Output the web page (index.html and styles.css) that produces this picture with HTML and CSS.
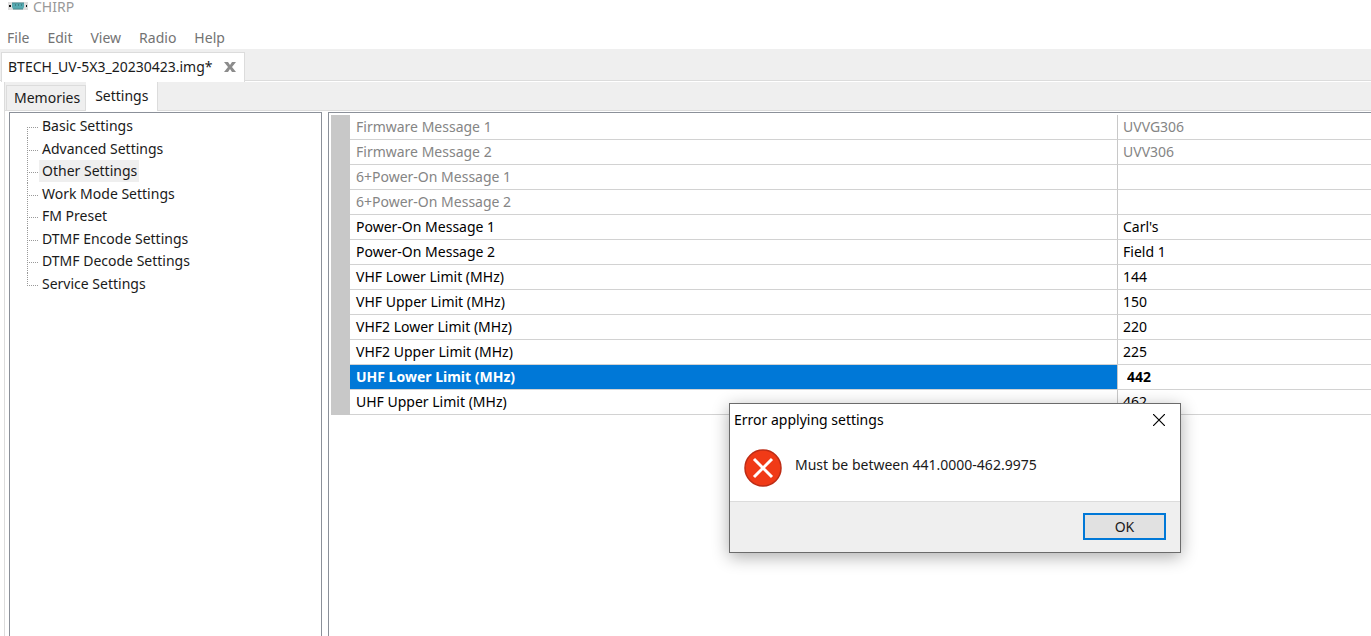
FILE: index.html
```html
<!DOCTYPE html>
<html lang="en">
<head>
<meta charset="utf-8">
<title>CHIRP</title>
<link rel="stylesheet" href="styles.css">
</head>
<body>
<div class="app">
  <header class="titlebar">
    <svg class="app-icon" width="20" height="8" viewBox="0 0 20 8" aria-hidden="true">
      <rect width="20" height="8" fill="#dedede"/>
      <path d="M4 1h12v4l-1 2H5L4 5z" fill="#55a9b0"/>
      <path d="M4 1h12M5 7h10" stroke="#4a8a90" fill="none"/>
      <path d="M1 4h2M18 4h1" stroke="#111" stroke-width="2"/>
      <path d="M7 3h1M10 3h1M13 3h1" stroke="#2d5b60"/>
    </svg>
    <span>CHIRP</span>
  </header>
  <nav class="menubar">
    <button type="button">File</button>
    <button type="button">Edit</button>
    <button type="button">View</button>
    <button type="button">Radio</button>
    <button type="button">Help</button>
  </nav>
  <div class="file-tabs">
    <div class="file-tab">
      <span>BTECH_UV-5X3_20230423.img*</span>
      <button type="button" class="tab-close" aria-label="Close tab">
        <svg width="12" height="10" viewBox="0 0 12 10"><path d="M0 0h4l2 3 2-3h4L8 5l4 5H8L6 7l-2 3H0l4-5z" fill="#8c8c8c"/></svg>
      </button>
    </div>
  </div>
  <div class="page">
    <div class="page-tabs" role="tablist">
      <button type="button" role="tab" class="page-tab">Memories</button>
      <button type="button" role="tab" class="page-tab active" aria-selected="true">Settings</button>
    </div>
    <main class="panes">
      <nav class="tree">
        <ul>
          <li><button type="button">Basic Settings</button></li>
          <li><button type="button">Advanced Settings</button></li>
          <li><button type="button" class="current">Other Settings</button></li>
          <li><button type="button">Work Mode Settings</button></li>
          <li><button type="button">FM Preset</button></li>
          <li><button type="button">DTMF Encode Settings</button></li>
          <li><button type="button">DTMF Decode Settings</button></li>
          <li><button type="button">Service Settings</button></li>
        </ul>
      </nav>
      <section class="grid">
        <table>
          <tbody>
            <tr class="readonly"><th scope="row">Firmware Message 1</th><td>UVVG306</td></tr>
            <tr class="readonly"><th scope="row">Firmware Message 2</th><td>UVV306</td></tr>
            <tr class="readonly"><th scope="row">6+Power-On Message 1</th><td></td></tr>
            <tr class="readonly"><th scope="row">6+Power-On Message 2</th><td></td></tr>
            <tr><th scope="row">Power-On Message 1</th><td>Carl's</td></tr>
            <tr><th scope="row">Power-On Message 2</th><td>Field 1</td></tr>
            <tr><th scope="row">VHF Lower Limit (MHz)</th><td>144</td></tr>
            <tr><th scope="row">VHF Upper Limit (MHz)</th><td>150</td></tr>
            <tr><th scope="row">VHF2 Lower Limit (MHz)</th><td>220</td></tr>
            <tr><th scope="row">VHF2 Upper Limit (MHz)</th><td>225</td></tr>
            <tr class="selected"><th scope="row"><label for="uhf-lower">UHF Lower Limit (MHz)</label></th><td><input id="uhf-lower" type="text" value="442"></td></tr>
            <tr><th scope="row">UHF Upper Limit (MHz)</th><td>462</td></tr>
          </tbody>
        </table>
      </section>
    </main>
  </div>
</div>
<div class="dialog" role="alertdialog" aria-labelledby="dialog-title" aria-describedby="dialog-text">
  <div class="dialog-title">
    <span id="dialog-title">Error applying settings</span>
    <button type="button" class="dialog-close" aria-label="Close">
      <svg width="12" height="12" viewBox="0 0 12 12"><path d="M0 0l12 12M12 0L0 12" stroke="#000" stroke-width="1.2"/></svg>
    </button>
  </div>
  <div class="dialog-body">
    <svg width="38" height="38" viewBox="0 0 38 38" aria-hidden="true">
      <circle cx="19" cy="19" r="18" fill="#f03a17" stroke="#bd2c15" stroke-width="1.5"/>
      <path d="M10 10l18 18M28 10L10 28" stroke="#fff" stroke-width="3"/>
    </svg>
    <p id="dialog-text">Must be between 441.0000-462.9975</p>
  </div>
  <div class="dialog-actions">
    <button type="button" class="ok">OK</button>
  </div>
</div>
</body>
</html>
```
FILE: styles.css
```css
* { box-sizing: border-box; }

body {
  margin: 0;
  overflow: hidden;
  background: #fff;
  color: #1a1a1a;
  font: 14px/20px "Noto Sans", sans-serif;
}

button, input {
  margin: 0;
  padding: 0;
  border: 0;
  background: none;
  color: inherit;
  font: inherit;
}

.app {
  display: flex;
  flex-direction: column;
  height: 100vh;
}

.titlebar {
  display: flex;
  align-items: flex-start;
  gap: 5px;
  height: 26px;
  padding-left: 8px;
  line-height: 14px;
  color: #999;
}

.app-icon { margin-top: 2px; }

.menubar {
  display: flex;
  gap: 18px;
  height: 23px;
  padding: 2px 7px 0;
  color: #737373;
}

.menubar button { height: 20px; }

.file-tabs {
  display: flex;
  height: 33px;
  padding: 3px 0 0 1px;
  background: #efefef;
  box-shadow: inset 0 -1px #fff, inset 0 -2px #dcdcdc;
}

.file-tab {
  display: flex;
  align-items: center;
  gap: 11px;
  padding: 0 8px 2px 6px;
  border: 1px solid #dcdcdc;
  border-bottom: 0;
  background: #fff;
}

.tab-close { display: flex; }

.page {
  display: flex;
  flex: 1;
  flex-direction: column;
  margin-left: 4px;
  border-left: 1px solid #dcdcdc;
}

.page-tabs {
  display: flex;
  align-items: flex-end;
  height: 29px;
  padding-left: 1px;
  background: #efefef;
  box-shadow: inset 0 -1px #dcdcdc;
}

.page-tab {
  height: 26px;
  padding: 0 5px 0 7px;
  border: 1px solid #dcdcdc;
}

.page-tab.active {
  height: 29px;
  padding: 0 9px 2px;
  border-width: 0 1px 0 0;
  background: #fff;
}

.panes {
  display: flex;
  flex: 1;
  gap: 6px;
  padding: 1px 0 0 4px;
}

.tree {
  width: 313px;
  border: 1px solid #8b9099;
  border-width: 1px 1px 0;
}

.tree ul {
  display: flex;
  flex-direction: column;
  height: 180px;
  margin: 2px 0 0 17px;
  padding: 0;
  list-style: none;
}

.tree li {
  display: flex;
  flex: 1;
  align-items: center;
  padding-left: 12px;
  background:
    repeating-linear-gradient(90deg, #999 0 1px, transparent 1px 2px) 0 12px / 11px 1px no-repeat,
    repeating-linear-gradient(#999 0 1px, transparent 1px 2px) 0 0 / 1px 100% no-repeat;
}

.tree li:first-child {
  background-position: 0 12px, 0 12px;
}

.tree li:last-child {
  background-size: 11px 1px, 1px 12px;
}

.tree button {
  height: 22px;
  padding: 0 2px 0 3px;
}

.tree .current { background: #efefef; }

.grid {
  flex: 1;
  padding: 2px 0 0 2px;
  border: 1px solid #8b9099;
  border-width: 1px 0 0 1px;
}

.grid table {
  width: 100%;
  border-collapse: separate;
  border-spacing: 0;
  border-left: 19px solid #c8c8c8;
  table-layout: fixed;
  color: #000;
}

.grid th, .grid td {
  height: 25px;
  padding: 0 6px;
  border-bottom: 1px solid #d2d2d2;
  font-weight: 400;
  text-align: left;
}

.grid td {
  width: 254px;
  padding-left: 5px;
  border-left: 1px solid #c8c8c8;
}

.grid .readonly th, .grid .readonly td { color: #858585; }

.grid .selected th {
  background: #0078d7;
  color: #fff;
  font-weight: 700;
}

.grid label { display: block; }

.grid input {
  display: block;
  width: 100%;
  height: 20px;
  padding-left: 4px;
  font-weight: 700;
}

.dialog {
  position: absolute;
  top: 403px;
  left: 729px;
  width: 452px;
  border: 1px solid #6b6b6b;
  background: #fff;
  box-shadow: 0 4px 16px rgba(0, 0, 0, .32);
}

.dialog-title {
  display: flex;
  align-items: center;
  justify-content: space-between;
  height: 32px;
  padding: 0 15px 0 4px;
  color: #000;
}

.dialog-close { display: flex; }

.dialog-body {
  display: flex;
  gap: 13px;
  height: 65px;
  padding: 13px 14px 0;
}

.dialog-body p {
  margin: 6px 0 0;
}

.dialog-actions {
  display: flex;
  justify-content: flex-end;
  padding: 11px 14px 12px;
  border-top: 1px solid #dcdcdc;
  background: #efefef;
}

.ok {
  width: 83px;
  height: 27px;
  border: 2px solid #0078d7;
  background: #e1e1e1;
}
```
